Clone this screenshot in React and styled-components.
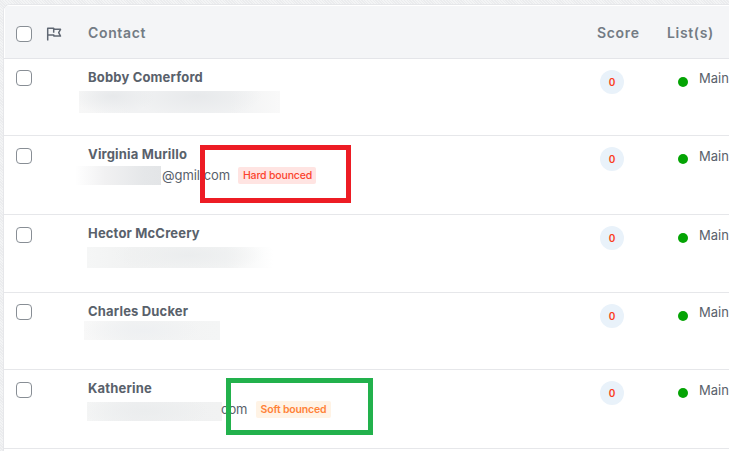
import React from 'react';
import styled, { createGlobalStyle } from 'styled-components';

const GlobalStyle = createGlobalStyle`
  * { box-sizing: border-box; }
  body { margin: 0; overflow: hidden; background: #f0f1f2; font-family: Inter, sans-serif; color: #59616b; }
`;

const Page = styled.main`
  position: relative;
  width: 729px;
  height: 451px;
  overflow: hidden;
  padding: 4px 0 0 3px;
  background: repeating-linear-gradient(45deg, #ebecee 0 1px, #f3f4f5 1px 2px);
`;

const Panel = styled.section`
  width: 740px;
  height: 460px;
  border: 1px solid #e6e7ea;
  border-radius: 7px 0 0 0;
  background: #fff;
  overflow: hidden;
`;

const Row = styled.div`
  display: grid;
  grid-template-columns: 84px 509px 70px 1fr;
  height: ${(p) => p.$height}px;
  border-bottom: 1px solid #e6e7ea;
`;

const HeaderRow = styled(Row)`
  align-items: center;
  background: #f4f5f7;
  border-bottom-color: #e4e5e9;
  box-shadow: inset 1px 1px #fff;
`;

const Heading = styled.span`
  padding-top: 3px;
  font-size: 14px;
  line-height: 18px;
  font-weight: 600;
  letter-spacing: 0.65px;
  color: #737b84;
`;

const SelectCell = styled.div`
  display: flex;
  align-items: flex-start;
  gap: 14px;
  padding: ${(p) => p.$top}px 0 0 12px;
`;

const Checkbox = styled.input.attrs({ type: 'checkbox' })`
  appearance: none;
  width: 16px;
  height: 16px;
  margin: 0;
  border: 1px solid #888e95;
  border-radius: 4px;
  background: #fff;
`;

const FlagIcon = styled.svg`
  display: block;
  width: 16px;
  height: 16px;
  fill: none;
  stroke: #5f6773;
  stroke-width: 1.5;
  stroke-linejoin: round;
`;

const ContactCell = styled.div`
  padding-top: 9px;
`;

const Name = styled.div`
  height: 18px;
  font-size: 13px;
  line-height: 18px;
  font-weight: 700;
  white-space: nowrap;
  letter-spacing: 0.17px;
`;

const EmailLine = styled.div`
  display: flex;
  align-items: flex-start;
  margin: ${(p) => p.$top}px 0 0 ${(p) => p.$left}px;
  white-space: nowrap;
`;

const Redaction = styled.span`
  flex: none;
  width: ${(p) => p.$width}px;
  height: ${(p) => p.$height}px;
  background: ${(p) => p.$fill};
`;

const Email = styled.span`
  width: ${(p) => p.$width}px;
  margin: ${(p) => p.$top}px 0 0 ${(p) => p.$left}px;
  font-size: 13px;
  line-height: 18px;
  letter-spacing: -0.05px;
`;

const Tag = styled.span`
  width: ${(p) => p.$width}px;
  height: 17px;
  margin: ${(p) => p.$top}px 0 0 9px;
  padding-left: ${(p) => (p.$soft ? 0 : 1)}px;
  border-radius: 2px;
  text-align: center;
  font-size: 10.5px;
  line-height: 17px;
  letter-spacing: -0.17px;
  font-weight: ${(p) => (p.$soft ? 600 : 500)};
  color: ${(p) => (p.$soft ? '#ff8238' : '#fb432d')};
  background: ${(p) => (p.$soft ? '#fff3e5' : '#ffe4e2')};
`;

const Score = styled.span`
  width: 24px;
  height: 24px;
  margin: 11px 0 0 3px;
  border-radius: 50%;
  background: #e9f2fa;
  color: #fb3d20;
  font-size: 10px;
  font-weight: 600;
  line-height: 24px;
  text-align: center;
`;

const ListCell = styled.div`
  display: flex;
  align-items: flex-start;
  padding-left: 11px;
`;

const Status = styled.i`
  width: 10px;
  height: 10px;
  margin-top: 18px;
  border-radius: 50%;
  background: #04a404;
`;

const ListName = styled.span`
  margin: ${(p) => p.$top}px 0 0 11px;
  font-size: 13px;
  line-height: 18px;
`;

const Highlight = styled.div`
  position: absolute;
  left: ${(p) => p.$x}px;
  top: ${(p) => p.$y}px;
  width: ${(p) => p.$width}px;
  height: ${(p) => p.$height}px;
  border: 5px solid ${(p) => p.$color};
  pointer-events: none;
`;

const contacts = [
  {
    name: 'Bobby Comerford', height: 77, top: 11,
    mask: { left: -9, top: 5, width: 201, height: 22, fill: 'radial-gradient(ellipse 42px 18px at 34px 5px, #e7e9eb, #e7e9eb00), radial-gradient(ellipse 65px 22px at 118px 5px, #e7e9eb, #e7e9eb00), linear-gradient(90deg, #f7f7f7, #f1f2f3 25%, #f1f2f3 75%, #f9f9f9)' },
  },
  {
    name: 'Virginia Murillo', height: 79, top: 12,
    mask: { left: -13, top: 3, width: 86, height: 19, fill: 'linear-gradient(90deg, #fff, #f1f1f2 35%, #e5e7e9 80%, #e3e5e7)' },
    email: '@gmil.com', emailWidth: 67, emailLeft: 1, emailTop: 0, tag: 'Hard bounced', tagWidth: 78, tagTop: 1,
  },
  {
    name: 'Hector McCreery', height: 78, top: 12,
    mask: { left: -1, top: 5, width: 186, height: 21, fill: 'radial-gradient(ellipse 75px 18px at 102px 8px, #ebedee, #ebedee00), linear-gradient(90deg, #f5f6f6, #f1f2f2 25%, #f3f4f4 75%, #fff)' },
  },
  {
    name: 'Charles Ducker', height: 77, top: 11,
    mask: { left: -4, top: 1, width: 136, height: 19, fill: 'radial-gradient(ellipse 58px 17px at 58px 9px, #eef0f2, #eef0f200), linear-gradient(90deg, #f8f8f8, #f2f3f3 35%, #f4f5f5)' },
  },
  {
    name: 'Katherine', height: 79, top: 12,
    mask: { left: -1, top: 5, width: 135, height: 19, fill: 'radial-gradient(ellipse 64px 19px at 58px 9px, #ebedee, #ebedee00), linear-gradient(90deg, #f4f5f5, #eff0f1 35%, #f1f2f2)' },
    email: 'com', emailWidth: 26, emailLeft: -1, emailTop: -2, tag: 'Soft bounced', tagWidth: 75, tagTop: -1, soft: true,
  },
];

function ContactRow({ contact }) {
  const { mask } = contact;
  return (
    <Row $height={contact.height}>
      <SelectCell $top={contact.top}>
        <Checkbox aria-label={`Select ${contact.name}`} />
      </SelectCell>
      <ContactCell>
        <Name>{contact.name}</Name>
        <EmailLine $left={mask.left} $top={mask.top}>
          <Redaction $width={mask.width} $height={mask.height} $fill={mask.fill} />
          {contact.email && (
            <>
              <Email $width={contact.emailWidth} $left={contact.emailLeft} $top={contact.emailTop}>{contact.email}</Email>
              <Tag $width={contact.tagWidth} $top={contact.tagTop} $soft={contact.soft}>{contact.tag}</Tag>
            </>
          )}
        </EmailLine>
      </ContactCell>
      <Score>0</Score>
      <ListCell>
        <Status />
        <ListName $top={contact.top - 1}>Main</ListName>
      </ListCell>
    </Row>
  );
}

export default function App() {
  return (
    <Page>
      <GlobalStyle />
      <Panel>
        <HeaderRow $height={54}>
          <SelectCell $top={5}>
            <Checkbox aria-label="Select all contacts" />
            <FlagIcon viewBox="0 0 16 16">
              <path d="M1.7 14.5V2.2h6l.5 1.1h6.3l-1.8 3.4 1.8 3.4H7.8v-1.2H1.7M7.7 2.2v4.6" />
            </FlagIcon>
          </SelectCell>
          <Heading>Contact</Heading>
          <Heading>Score</Heading>
          <Heading>List(s)</Heading>
        </HeaderRow>
        {contacts.map((contact) => <ContactRow key={contact.name} contact={contact} />)}
      </Panel>
      <Highlight $x={200} $y={145} $width={151} $height={58} $color="#ed1c24" />
      <Highlight $x={226} $y={378} $width={147} $height={57} $color="#22b14c" />
    </Page>
  );
}
